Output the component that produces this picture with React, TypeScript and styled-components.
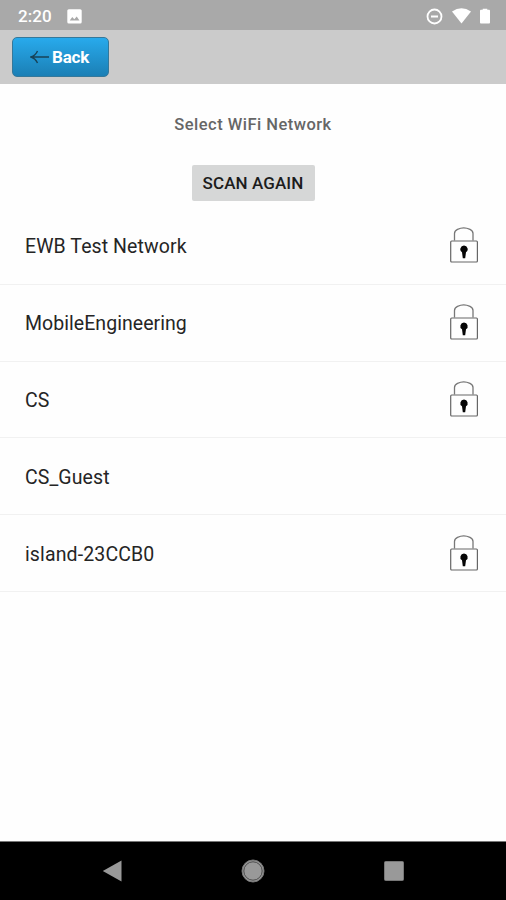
import React from "react";
import styled, { createGlobalStyle } from "styled-components";

const GlobalStyle = createGlobalStyle`
  * { box-sizing: border-box; }
  body { margin: 0; background: #fff; font-family: Roboto, "Liberation Sans", sans-serif; }
`;

const Screen = styled.div`
  display: flex;
  flex-direction: column;
  width: 506px;
  height: 900px;
  background: #fefefe;
  overflow: hidden;
`;

const StatusBar = styled.header`
  display: flex;
  align-items: center;
  height: 30px;
  padding: 2px 16px 0 18px;
  background: #a9a9a9;
  color: #fff;
`;

const Clock = styled.span`
  width: 49px;
  font-size: 17px;
  font-weight: 500;
  line-height: 20px;
  letter-spacing: 0.1px;
  white-space: nowrap;
`;

const StatusIcons = styled.div`
  display: flex;
  align-items: center;
  gap: 9px;
  margin-left: auto;
`;

const Glyph = styled.svg`
  display: block;
  flex: none;
`;

const AppBar = styled.nav`
  height: 54px;
  padding: 7px 12px;
  background: #cbcbcb;
`;

const BackButton = styled.button`
  display: flex;
  align-items: center;
  gap: 3px;
  width: 97px;
  height: 40px;
  padding: 0 0 1px 17px;
  border: 1px solid #35789a;
  border-radius: 5px;
  background: linear-gradient(#28aaec, #1b7fb5);
  color: #fff;
  font: 700 17px/20px Roboto, sans-serif;
  letter-spacing: -0.2px;
`;

const Content = styled.main`
  display: flex;
  flex: 1;
  flex-direction: column;
  align-items: center;
`;

const Title = styled.h1`
  margin: 31px 0 0;
  font-size: 16.5px;
  font-weight: 500;
  line-height: 20px;
  letter-spacing: 0.48px;
  color: #666;
`;

const ScanButton = styled.button`
  width: 123px;
  height: 36px;
  margin-top: 30px;
  padding: 0 0 1px;
  border: 0;
  border-radius: 2px;
  background: #d6d7d7;
  color: #1c1c1c;
  font: 500 17px/20px Roboto, sans-serif;
  letter-spacing: 0.1px;
  white-space: nowrap;
`;

const NetworkList = styled.ul`
  width: 100%;
  margin: 7px 0 0;
  padding: 0;
  list-style: none;
`;

const NetworkRow = styled.li`
  display: flex;
  align-items: center;
  justify-content: space-between;
  height: 76.8px;
  padding: 0 27px 0 25px;
  border-bottom: 1px solid #f1f1f1;
`;

const NetworkName = styled.span<{ $spacing: number }>`
  padding-top: 3px;
  font-size: 19.5px;
  line-height: 24px;
  letter-spacing: ${(p) => p.$spacing}px;
  color: #252525;
`;

const NavBar = styled.footer`
  display: flex;
  align-items: center;
  justify-content: space-between;
  height: 59px;
  padding: 0 102px;
  border-top: 1px solid #777;
  background: #000;
`;

const LockIcon = () => (
  <Glyph width="30" height="39" viewBox="0 0 30 39" fill="none">
    <path d="M5.5 14.5V7.5Q5.5 4.7 8.5 3.3Q14.7.4 21 3.3Q24 4.7 24 7.5V14.5" stroke="#777" strokeWidth="1.3" />
    <rect x="1.7" y="15" width="26.7" height="21" rx="1" stroke="#666" strokeWidth="1.2" />
    <path d="M15 19.5a3.7 3.7 0 0 1 2 6.8l-.8 5.9h-2.4l-.8-5.9a3.7 3.7 0 0 1 2-6.8Z" fill="#050505" />
  </Glyph>
);

const networks = [
  { name: "EWB Test Network", locked: true, spacing: 0.09 },
  { name: "MobileEngineering", locked: true, spacing: 0.05 },
  { name: "CS", locked: true, spacing: 0 },
  { name: "CS_Guest", locked: false, spacing: 0.1 },
  { name: "island-23CCB0", locked: true, spacing: 0.13 },
];

export default function App() {
  return (
    <Screen>
      <GlobalStyle />
      <StatusBar>
        <Clock>2:20</Clock>
        <Glyph width="15" height="15" viewBox="0 0 15 15">
          <rect x=".3" y=".3" width="14.4" height="14.2" rx="1.5" fill="#fff" />
          <path d="M2.7 11.5 5.3 8l2 2.3L9.7 7.5l2.8 4Z" fill="#a9a9a9" />
        </Glyph>
        <StatusIcons>
          <Glyph width="17" height="17" viewBox="0 0 17 17" fill="none" stroke="#fff">
            <circle cx="8.5" cy="8.5" r="7" strokeWidth="1.8" />
            <path d="M5 8.5h7" strokeWidth="2" />
          </Glyph>
          <Glyph width="19" height="16" viewBox="0 0 19 16">
            <path d="M0 3.5Q9.5-3 19 3.5L9.5 15.5Z" fill="#fff" />
          </Glyph>
          <Glyph width="10" height="16" viewBox="0 0 11 16" preserveAspectRatio="none">
            <path d="M3 .7h5v1.1h2q1 0 1 1V14.5q0 1-1 1H1q-1 0-1-1V2.8q0-1 1-1h2Z" fill="#fff" />
          </Glyph>
        </StatusIcons>
      </StatusBar>
      <AppBar>
        <BackButton>
          <Glyph width="19" height="14" viewBox="0 0 19 14" fill="none" stroke="#174257" strokeWidth="1.4">
            <path d="M19 7H1M7.5 1Q5.5 5.5 1 7Q5.5 8.5 7.5 13" />
          </Glyph>
          Back
        </BackButton>
      </AppBar>
      <Content>
        <Title>Select WiFi Network</Title>
        <ScanButton>SCAN AGAIN</ScanButton>
        <NetworkList>
          {networks.map((network) => (
            <NetworkRow key={network.name}>
              <NetworkName $spacing={network.spacing}>{network.name}</NetworkName>
              {network.locked && <LockIcon />}
            </NetworkRow>
          ))}
        </NetworkList>
      </Content>
      <NavBar>
        <Glyph width="20" height="22" viewBox="0 0 20 22">
          <path d="M.8 11 19.5.5v21Z" fill="#999" />
        </Glyph>
        <Glyph width="24" height="24" viewBox="0 0 24 24">
          <circle cx="12" cy="12" r="11" fill="#999" stroke="#777" />
          <circle cx="12" cy="12" r="9.2" fill="none" stroke="#444" strokeWidth=".9" />
        </Glyph>
        <Glyph width="20" height="20" viewBox="0 0 20 20">
          <rect x=".5" y=".5" width="19" height="19" rx="1" fill="#999" stroke="#777" />
        </Glyph>
      </NavBar>
    </Screen>
  );
}
